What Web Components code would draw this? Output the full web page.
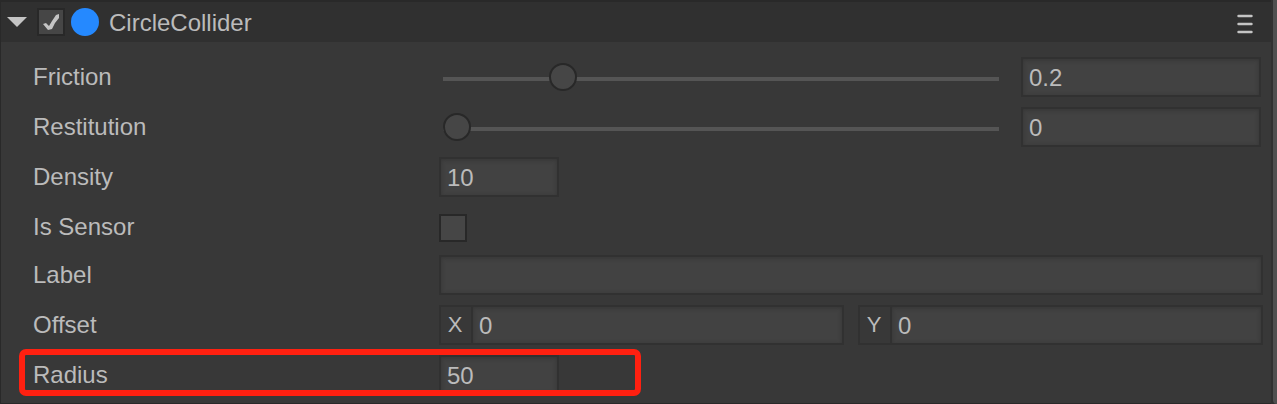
<!DOCTYPE html>
<html lang="en">
<head>
<meta charset="utf-8">
<title>CircleCollider</title>
<style>
  html, body { margin: 0; background: #383838; }
  body { font: 24px/40px "Liberation Sans", Arial, sans-serif; color: #bbb; }
</style>
</head>
<body>
<inspector-panel>
  <component-header slot="header" heading="CircleCollider"></component-header>
  <slider-property label="Friction" value="0.2"></slider-property>
  <slider-property label="Restitution" value="0"></slider-property>
  <text-property label="Density" value="10" compact></text-property>
  <check-property label="Is Sensor"></check-property>
  <text-property label="Label" value=""></text-property>
  <vector-property label="Offset" x="0" y="0"></vector-property>
  <text-property label="Radius" value="50" compact highlight></text-property>
</inspector-panel>

<script>
const controls = `
  * { box-sizing: border-box; }
  input { font: inherit; color: inherit; margin: 0; border-radius: 0; outline: none; }
  input[type=text] {
    display: block; width: 100%; min-width: 0; height: 40px;
    padding: 2px 6px 0; border: 2px solid #313131;
    background: #424242; box-shadow: inset 0 1px 4px #353535;
  }
  input[type=checkbox] {
    appearance: none; display: block; flex: none; width: 28px; height: 28px;
    border: 2px solid #282828; background: #464646;
  }
  input[type=checkbox]:checked::before {
    content: ""; display: block; width: 24px; height: 24px; background: #c4c4c4;
    clip-path: polygon(4px 14px, 7px 13px, 10px 16px, 13px 11px, 17px 5px, 20px 4px, 20px 8px, 16px 13px, 13px 19px, 9px 20px);
  }
`;
const row = `
  :host { display: grid; grid-template-columns: 406px minmax(0, 1fr); align-items: start;
          padding: 0 8px 0 32px; position: relative; }
  label { white-space: nowrap; }
`;

class Base extends HTMLElement {
  connectedCallback() {
    if (this.shadowRoot) return;
    this.attachShadow({ mode: "open" }).innerHTML = this.template();
    this.ready();
  }
  attr(name) { return this.getAttribute(name) || ""; }
  ready() {}
}

customElements.define("inspector-panel", class extends Base {
  template() { return `<style>
      * { box-sizing: border-box; }
      :host { display: flex; min-height: 100vh; background: #383838; }
      .main { flex: 1; min-width: 0; border: solid #292929; border-width: 2px 0 1px 1px; }
      .rows { display: flex; flex-direction: column; gap: 10px; padding: 15px 0 8px; }
      .gutter { width: 6px; padding-left: 2px; background: #313131; }
      .thumb { height: 100%; background: #505050; border-bottom-left-radius: 4px; }
    </style>
    <section class="main"><slot name="header"></slot><div class="rows"><slot></slot></div></section>
    <div class="gutter"><div class="thumb"></div></div>`; }
});

customElements.define("component-header", class extends Base {
  template() { return `<style>${controls}
      :host { display: flex; align-items: center; height: 40px; padding: 0 18px 0 6px; background: #303030; }
      button { display: block; padding: 0; border: 0; background: none; color: #c4c4c4; }
      svg { display: block; }
      .fold { margin-right: 10px; }
      .menu { padding-top: 4px; }
      .dot { width: 28px; height: 28px; margin: 0 10px 0 6px; border-radius: 50%; background: #2589ff; }
      label { flex: 1; padding-top: 2px; }
    </style>
    <button class="fold" aria-label="Collapse"><svg width="20" height="12" viewBox="0 0 20 12"><path fill="currentColor" d="M0 1H20L10 11Z"/></svg></button>
    <input type="checkbox" id="enabled" checked>
    <span class="dot"></span>
    <label for="enabled">${this.attr("heading")}</label>
    <button class="menu" aria-label="Menu"><svg width="16" height="20" viewBox="0 0 16 20"><path stroke="currentColor" stroke-width="2.400" stroke-linecap="round" d="M1.500 2H14.500M1.500 10H14.500M1.500 18H14.500"/></svg></button>`; }
});

customElements.define("slider-property", class extends Base {
  template() { return `<style>${controls}${row}
      .pair { display: flex; gap: 22px; padding: 0 2px 0 4px; height: 40px; }
      input[type=text] { width: 240px; flex: none; }
      input[type=range] { appearance: none; flex: 1; min-width: 0; height: 44px; background: none; }
      input[type=range]::-webkit-slider-runnable-track { height: 4px; background: #555; }
      input[type=range]::-webkit-slider-thumb {
        appearance: none; box-sizing: border-box; width: 28px; height: 28px; margin-top: -14px;
        border: 2px solid #282828; border-radius: 50%; background: #464646;
      }
    </style>
    <label for="number">${this.attr("label")}</label>
    <div class="pair">
      <input type="range" min="0" max="1" step="0.01" value="${this.attr("value")}" aria-label="${this.attr("label")}">
      <input type="text" id="number" value="${this.attr("value")}">
    </div>`; }
  ready() {
    const [range, number] = this.shadowRoot.querySelectorAll("input");
    range.addEventListener("input", () => { number.value = range.value; });
    number.addEventListener("change", () => { range.value = number.value; });
  }
});

customElements.define("text-property", class extends Base {
  template() { return `<style>${controls}${row}
      :host([compact]) input { width: 120px; }
      .mark { position: absolute; top: -6px; left: 18px; width: 622px; height: 47px;
              border: 6px solid #ff2010; border-radius: 7px; pointer-events: none; }
    </style>
    <label for="field">${this.attr("label")}</label>
    <input type="text" id="field" value="${this.attr("value")}">
    ${this.hasAttribute("highlight") ? '<span class="mark"></span>' : ""}`; }
});

customElements.define("check-property", class extends Base {
  template() { return `<style>${controls}${row}
      :host { height: 38px; }
      input[type=checkbox] { margin-top: 7px; }
    </style>
    <label for="check">${this.attr("label")}</label>
    <input type="checkbox" id="check">`; }
});

customElements.define("vector-property", class extends Base {
  template() { return `<style>${controls}${row}
      .axes { display: flex; gap: 14px; }
      .axis { flex: 1; display: flex; min-width: 0; }
      .axis label { width: 32px; height: 40px; flex: none; border: 2px solid #313131; border-right: 0;
                    padding-right: 2px; font-size: 22px; line-height: 35px; text-align: center; }
    </style>
    <span>${this.attr("label")}</span>
    <div class="axes" role="group" aria-label="${this.attr("label")}">
      <div class="axis"><label for="x">X</label><input type="text" id="x" value="${this.attr("x")}"></div>
      <div class="axis"><label for="y">Y</label><input type="text" id="y" value="${this.attr("y")}"></div>
    </div>`; }
});
</script>
</body>
</html>
